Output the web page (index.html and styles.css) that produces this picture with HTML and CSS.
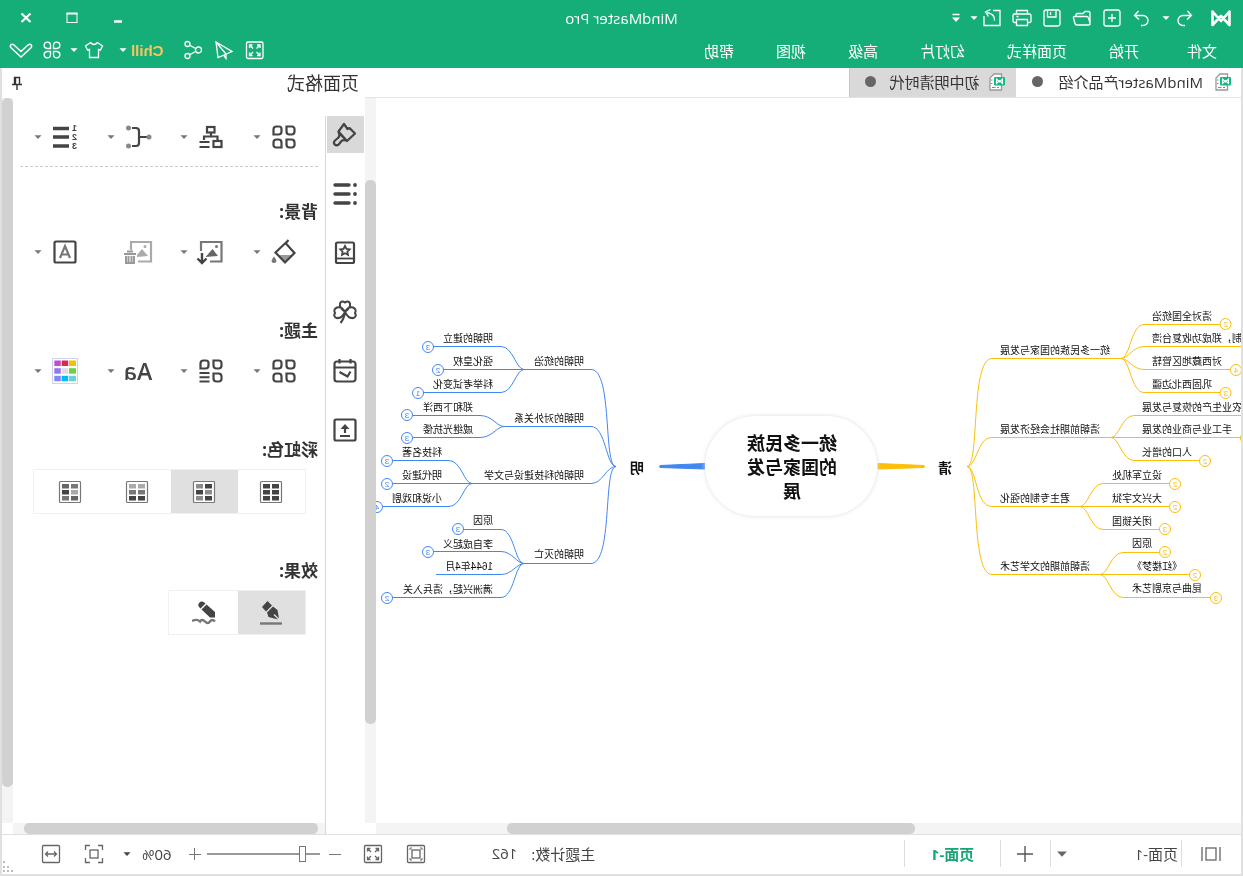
FILE: index.html
```html
<!DOCTYPE html>
<html lang="zh-CN">
<head>
<meta charset="utf-8">
<title>MindMaster Pro</title>
<link rel="stylesheet" href="styles.css">
</head>
<body>
<svg class="defs" aria-hidden="true">
  <symbol id="caret" viewBox="0 0 10 10"><path d="M1.500 3.200h7L5 7z" fill="currentColor"/></symbol>
  <symbol id="doc" viewBox="0 0 16 18"><path d="M3.500 1h7.500l4 4v12H3.500z" fill="#fff" stroke="#999" stroke-width="1.300"/><path d="M12.500 7h1.500M12.500 10.500h1.500M6 14.500h2M9.500 14.500h3.500" stroke="#888"/><rect x="0" y="4" width="11" height="8.500" rx="1" fill="#10b981"/><path d="M2.500 10.500V6L5.500 9 8.500 6v4.500L5.500 7.500z" fill="none" stroke="#fff" stroke-width="1.100"/></symbol>
  <symbol id="leaves" viewBox="0 0 26 26"><g fill="none" stroke="currentColor" stroke-width="2.200"><path d="M5 2.500h5.500v5a3 3 0 0 1-3 3h-2a3 3 0 0 1-3-3V5A2.500 2.500 0 0 1 5 2.500z"/><path d="M18 2.500h2.500A3 3 0 0 1 23.500 5.500v5h-5a3 3 0 0 1-3-3V5A2.500 2.500 0 0 1 18 2.500z"/><path d="M5.500 15.500h5v5a3 3 0 0 1-3 3H5A2.500 2.500 0 0 1 2.500 21v-2.500a3 3 0 0 1 3-3z"/><path d="M18.500 15.500h2a3 3 0 0 1 3 3V21a2.500 2.500 0 0 1-2.500 2.500h-5.500v-5a3 3 0 0 1 3-3z"/></g></symbol>
</svg>
<div class="app">
  <header class="header">
    <div class="titlebar">
      <div class="quick">
        <svg class="logo" viewBox="0 0 22 20"><path d="M2.500 17V3.500L11 13 19.500 3.500V17L11 8z" fill="none" stroke="#fff" stroke-width="2.600" stroke-linejoin="round"/></svg>
        <button class="ic" aria-label="撤销"><svg viewBox="0 0 20 20"><path d="M6.500 3L2.500 7.500l4.500 4M3 7.500h8a5 5 0 0 1 0 10H9"/></svg></button>
        <button class="dd" aria-label="撤销列表"><svg><use href="#caret"/></svg></button>
        <button class="ic redo" aria-label="重做"><svg viewBox="0 0 20 20"><path d="M13.500 3l4 4.500-4.500 4M17 7.500H9a5 5 0 0 0 0 10h2"/></svg></button>
        <button class="ic" aria-label="新建"><svg viewBox="0 0 20 20"><rect x="2" y="2" width="16" height="16" rx="2"/><path d="M10 6v8M6 10h8"/></svg></button>
        <button class="ic" aria-label="打开"><svg viewBox="0 0 20 20"><path d="M2 17V5q0-1.500 1.500-1.500H7l2 2h5.500Q16 5.500 16 7v1M2 15l1.500-5Q4 8.500 5.500 8.500h12q1.500 0 1 1.500l-1.500 5.500Q16.700 17 15 17H3q-1 0-1-2z"/></svg></button>
        <button class="ic" aria-label="保存"><svg viewBox="0 0 20 20"><rect x="2" y="2" width="16" height="16" rx="2"/><path d="M6 2v7h8.500V2M11.500 4v3"/></svg></button>
        <button class="ic" aria-label="打印"><svg viewBox="0 0 20 20"><path d="M4.500 6V2.500h11V6M4.500 14.500H2.500Q1 14.500 1 13V7.500Q1 6 2.500 6h15Q19 6 19 7.500V13q0 1.500-1.500 1.500h-2M4.500 11.500h11v6h-11zM13.500 8.500h2"/></svg></button>
        <button class="ic" aria-label="导出"><svg viewBox="0 0 20 20"><path d="M9 2.500H2v15h16V8M7.500 12.500Q7 6 15 4.500M11.500 1.500l5 2.500-3 4.500"/></svg></button>
        <button class="dd" aria-label="导出列表"><svg><use href="#caret"/></svg></button>
        <button class="dd more" aria-label="自定义快速访问"><svg viewBox="0 0 10 12"><path d="M1.500 2.500h7" stroke="#fff" stroke-width="1.500"/><path d="M1 5.500h8L5 10z" fill="#fff"/></svg></button>
      </div>
      <h1 class="title">MindMaster Pro</h1>
      <div class="winbtns">
        <button aria-label="最小化"><svg viewBox="0 0 14 14"><path d="M3 10.500h8" stroke="#fff" stroke-width="2.500"/></svg></button>
        <button aria-label="最大化"><svg viewBox="0 0 14 14"><rect x="2" y="2.500" width="10" height="9" fill="none" stroke="#fff"/><path d="M1.500 2.500h11" stroke="#fff" stroke-width="2"/></svg></button>
        <button aria-label="关闭"><svg viewBox="0 0 14 14"><path d="M2.500 2.500l9 8.500M11.500 2.500L2.500 11" stroke="#fff" stroke-width="2.200"/></svg></button>
      </div>
    </div>
    <div class="menubar">
      <nav class="menus">
        <button class="file">文件</button><button>开始</button><button>页面样式</button><button>幻灯片</button><button>高级</button><button>视图</button><button>帮助</button>
      </nav>
      <div class="tools">
        <button class="ic" aria-label="全屏"><svg viewBox="0 0 20 20"><rect x="2" y="2" width="16.500" height="16.500" rx="1.500"/><path d="M5 8V5h3M5 5l3.500 3.500M12.500 5h3v3M15.500 5L12 8.500M5 12.500v3h3M5 15.500L8.500 12M15.500 12.500v3h-3M15.500 15.500L12 12"/></svg></button>
        <button class="ic" aria-label="发送"><svg viewBox="0 0 20 20"><path d="M18 2L2 11.500l5.500 2.500L16 17.500zM18 2L8 14v4.500l2.500-3.500"/></svg></button>
        <button class="ic share" aria-label="分享"><svg viewBox="0 0 20 20"><circle cx="4.500" cy="10" r="3"/><circle cx="15.500" cy="4" r="2.500"/><circle cx="15.500" cy="16" r="2.500"/><path d="M7 8.700l6.300-3.500M7 11.300l6.300 3.500"/></svg></button>
        <button class="chill">Chill</button>
        <button class="dd chilldd" aria-label="音乐"><svg><use href="#caret"/></svg></button>
        <button class="ic" aria-label="皮肤"><svg viewBox="0 0 20 20"><path d="M6.500 2.500Q10 6.500 13.500 2.500L18.500 6l-2 4-2-.7V17.500h-9V9.300l-2 .7-2-4z"/></svg></button>
        <button class="dd skindd" aria-label="皮肤列表"><svg><use href="#caret"/></svg></button>
        <button class="ic apps" aria-label="应用"><svg viewBox="0 0 20 20"><path d="M8.500 8.500H5A3.200 3.200 0 1 1 8.500 5zM11.500 8.500V5A3.200 3.200 0 1 1 15 8.500zM8.500 11.500V15A3.200 3.200 0 1 1 5 11.500zM11.500 11.500H15A3.200 3.200 0 1 1 11.500 15z"/></svg></button>
        <button class="fold" aria-label="折叠"><svg viewBox="0 0 24 20"><path d="M1.800 7.500Q.8 5.800 2 4.700 3.500 3.500 5 5l7 6.500L19 5q1.500-1.500 3-.3 1.200 1.100.2 2.800L12 17z" fill="none" stroke="#fff" stroke-width="1.500"/></svg></button>
      </div>
    </div>
  </header>

  <main class="workspace">
    <section class="editor">
      <div class="tabs">
        <button class="tab active"><svg class="doc"><use href="#doc"/></svg><span>MindMaster产品介绍</span><i class="dot"></i></button>
        <button class="tab"><svg class="doc"><use href="#doc"/></svg><span>初中明清时代</span><i class="dot"></i></button>
      </div>
      <div class="canvas">
        <svg class="map" width="865" height="725" viewBox="2 98 865 725">
          <g class="yellow">
            <path d="M319 465.500L365 463.500V469L319 467.500Q318 466.500 319 465.500z" class="taper"/>
            <path d="M276 466.500C263 466.500 273 358.500 251 358.500H122M276 466.500C266 466.500 266 437.500 251 437.500H132M276 466.500C266 466.500 268 506.500 251 506.500H163M276 466.500C263 466.500 273 574.500 251 574.500H143"/>
            <path d="M122 358.500C113 358.500 112 324.500 99 324.500H23M122 358.500C115 358.500 110 346.500 99 346.500H2M122 358.500C115 358.500 110 369.500 99 369.500H13M122 358.500C113 358.500 112 392.500 99 392.500H23"/>
            <path d="M132 437.500C124 437.500 121 415.500 109 415.500H2M132 437.500H2M132 437.500C124 437.500 121 460.500 109 460.500H44"/>
            <path d="M163 506.500C155 506.500 152 483.500 140 483.500H74M163 506.500H74M163 506.500C155 506.500 152 529.500 140 529.500H84"/>
            <path d="M143 574.500C135 574.500 132 552.500 120 552.500H84M143 574.500H54M143 574.500C135 574.500 132 597.500 120 597.500H33"/>
            <g class="rings"><circle cx="17.500" cy="324" r="5.500"/><circle cx="7" cy="370" r="5.500"/><circle cx="17.500" cy="393" r="5.500"/><circle cx="-3" cy="438" r="5.500"/><circle cx="38" cy="461" r="5.500"/><circle cx="68" cy="484" r="5.500"/><circle cx="68" cy="507" r="5.500"/><circle cx="78" cy="529" r="5.500"/><circle cx="78" cy="552" r="5.500"/><circle cx="48" cy="575" r="5.500"/><circle cx="27" cy="598" r="5.500"/></g>
            <g class="nums"><text x="17" y="327">2</text><text x="7" y="373">4</text><text x="17" y="396">3</text><text x="38" y="464">2</text><text x="68" y="487">2</text><text x="68" y="510">2</text><text x="78" y="532">3</text><text x="78" y="555">2</text><text x="48" y="578">2</text><text x="27" y="601">3</text></g>
          </g>
          <g class="topics end">
            <text x="243" y="354">统一多民族的国家与发展</text><text x="243" y="433">清朝前期社会经济发展</text><text x="243" y="502">君主专制的强化</text><text x="243" y="570">清朝前期的文学艺术</text>
            <text x="91" y="320">清对全国统治</text><text x="91" y="342">制，郑成功收复台湾</text><text x="91" y="365">对西藏地区管辖</text><text x="91" y="388">巩固西北边疆</text>
            <text x="101" y="411">农业生产的恢复与发展</text><text x="101" y="433">手工业与商业的发展</text><text x="101" y="456">人口的增长</text>
            <text x="131" y="479">设立军机处</text><text x="131" y="502">大兴文字狱</text><text x="131" y="525">闭关锁国</text>
            <text x="111" y="547">原因</text><text x="111" y="570">《红楼梦》</text><text x="111" y="592">昆曲与京剧艺术</text>
          </g>
          <g class="blue">
            <path d="M583 465.500L538 463.500V469L583 467.500Q584 466.500 583 465.500z" class="taper"/>
            <path d="M627 466.500C640 466.500 630 369.500 652 369.500H719M627 466.500C637 466.500 637 426.500 652 426.500H739M627 466.500C637 466.500 640 483.500 652 483.500H771M627 466.500C640 466.500 630 563.500 652 563.500H719"/>
            <path d="M719 369.500C727 369.500 730 346.500 742 346.500H810M719 369.500H800M719 369.500C727 369.500 730 392.500 742 392.500H820"/>
            <path d="M739 426.500C746 426.500 751 415.500 763 415.500H830M739 426.500C746 426.500 751 437.500 763 437.500H830"/>
            <path d="M771 483.500C779 483.500 782 460.500 794 460.500H850M771 483.500H850M771 483.500C779 483.500 782 506.500 794 506.500H861"/>
            <path d="M719 563.500C728 563.500 729 529.500 742 529.500H779M719 563.500C726 563.500 731 551.500 742 551.500H809M719 563.500C726 563.500 731 574.500 742 574.500H807M719 563.500C728 563.500 729 597.500 742 597.500H850"/>
            <g class="rings"><circle cx="815" cy="347" r="5.500"/><circle cx="805" cy="370" r="5.500"/><circle cx="825" cy="393" r="5.500"/><circle cx="836" cy="415" r="5.500"/><circle cx="836" cy="438" r="5.500"/><circle cx="856" cy="461" r="5.500"/><circle cx="856" cy="484" r="5.500"/><circle cx="866" cy="507" r="5.500"/><circle cx="785" cy="529" r="5.500"/><circle cx="815" cy="552" r="5.500"/><circle cx="856" cy="598" r="5.500"/></g>
            <g class="nums"><text x="815" y="350">3</text><text x="805" y="373">2</text><text x="825" y="396">1</text><text x="836" y="418">3</text><text x="836" y="441">3</text><text x="856" y="464">3</text><text x="856" y="487">2</text><text x="866" y="510">4</text><text x="785" y="532">3</text><text x="815" y="555">3</text><text x="856" y="601">2</text></g>
          </g>
          <g class="topics">
            <text x="659" y="365">明朝的统治</text><text x="659" y="422">明朝的对外关系</text><text x="659" y="479">明朝的科技建设与文学</text><text x="659" y="558">明朝的灭亡</text>
            <text x="750" y="342">明朝的建立</text><text x="750" y="365">强化皇权</text><text x="750" y="388">科举考试变化</text>
            <text x="770" y="411">郑和下西洋</text><text x="770" y="433">戚继光抗倭</text>
            <text x="801" y="456">科技名著</text><text x="801" y="479">明代建设</text><text x="801" y="502">小说和戏剧</text>
            <text x="750" y="524">原因</text><text x="750" y="548">李自成起义</text><text x="750" y="570">1644年4月</text><text x="750" y="593">满洲兴起，清兵入关</text>
          </g>
          <g class="mains"><text x="291" y="473">清</text><text x="599" y="473">明</text></g>
          <rect class="root" x="366" y="416" width="172" height="100" rx="50"/>
          <g class="roottext"><text x="451" y="450">统一多民族</text><text x="451" y="474">的国家与发</text><text x="451" y="498">展</text></g>
        </svg>
      </div>
      <div class="vscroll"><div class="thumb"></div></div>
      <div class="hscroll"><div class="thumb"></div></div>
    </section>

    <aside class="sidebar">
      <div class="sidehead"><h2>页面格式</h2><button class="pin" aria-label="固定"><svg viewBox="0 0 14 14"><path d="M4.500 8V1.500h5V8M8.500 1.500V8M2 8.500h10M7 9v5" fill="none" stroke="#333" stroke-width="1.400"/></svg></button></div>
      <div class="rail">
        <button class="on" aria-label="页面格式"><svg viewBox="0 0 26 26"><path d="M14 2L19.500 9.500 11 19 3 11.500 8.500 6 10.500 7zM20 10L10.500 19.500M19 11.500q-1 3 1 4.500l3 2.500q2 2 .3 4-2 1.500-4 0l-2.800-3.500q-1.500-1.500-4.500-.5" stroke-linejoin="round"/></svg></button>
        <button aria-label="大纲"><svg viewBox="0 0 26 26"><path d="M9 4h14M9 13h14M9 22h14" stroke-width="3.400" stroke-linecap="round"/><g fill="currentColor" stroke="none"><circle cx="3" cy="4" r="1.900"/><circle cx="3" cy="13" r="1.900"/><circle cx="3" cy="22" r="1.900"/></g></svg></button>
        <button aria-label="图标"><svg viewBox="0 0 26 26"><rect x="4" y="2.500" width="18" height="20.500" rx="1.500"/><path d="M4 18.500h18" stroke-width="1.800"/><path d="M13 6l1.500 3 3.200.4-2.300 2.200.6 3.200-3-1.500-3 1.500.6-3.200L8.300 9.400l3.200-.4z" stroke-width="1.800"/></svg></button>
        <button aria-label="剪贴画"><svg viewBox="0 0 26 26"><path d="M13 13Q7 8.500 8 4.500 9.500 1 13 3.500 16.500 1 18 4.500q1 4-5 8.500zM13 13Q10 7.500 5 8.500 1 10.500 3 14 1 17.500 4.500 19 9.500 20 13 13zM13 13Q16 7.500 21 8.500q4 2 2 5.500 2 3.500-1.500 5Q16.500 20 13 13zM13 13q1 7 4.500 11" stroke-width="2"/></svg></button>
        <button aria-label="任务"><svg viewBox="0 0 26 26"><rect x="2.500" y="3.500" width="21" height="20" rx="2.500"/><path d="M2.500 9.500h21M7.500 1v4.500M18.500 1v4.500M7.500 13.500l3 5 8-4.500"/></svg></button>
        <button aria-label="导出"><svg viewBox="0 0 26 26"><rect x="2.500" y="2.500" width="21" height="21" rx="1.500"/><path d="M8 19h10M13 16v-5"/><path d="M8.500 12L13 7l4.500 5z" fill="currentColor" stroke="none"/></svg></button>
      </div>
      <div class="panel">
        <div class="row first">
          <button aria-label="布局"><svg><use href="#leaves"/></svg><svg class="c"><use href="#caret"/></svg></button>
          <button aria-label="结构"><svg viewBox="0 0 26 26" fill="none" stroke="currentColor" stroke-width="2.200"><rect x="9.500" y="3" width="7.500" height="5.500"/><path d="M13 9v4M6.500 16v-3.500h13.500V16"/><rect x="2.500" y="17" width="8" height="6"/><path d="M14.500 18h10M14.500 23h10"/></svg><svg class="c"><use href="#caret"/></svg></button>
          <button aria-label="连线"><svg viewBox="0 0 26 26"><path d="M3 13h9M19 4h-4q-3 0-3 3v12q0 3 3 3h4" fill="none" stroke="currentColor" stroke-width="2.200"/><g fill="#888"><circle cx="2" cy="13" r="2.500"/><circle cx="22.500" cy="4" r="2.500"/><circle cx="22.500" cy="22" r="2.500"/></g></svg><svg class="c"><use href="#caret"/></svg></button>
          <button aria-label="编号"><svg viewBox="0 0 26 26"><path d="M9 4.500h16M9 13h16M9 22h16" stroke="currentColor" stroke-width="3.400"/><g class="tiny"><text x="1" y="7">1</text><text x="1" y="16">2</text><text x="1" y="25">3</text></g></svg><svg class="c"><use href="#caret"/></svg></button>
        </div>
        <h3>背景:</h3>
        <div class="row">
          <button aria-label="背景颜色"><svg viewBox="0 0 26 26"><path d="M4.500 16h15L12.500 23z" fill="#999"/><path d="M11.500 4l10 9.500-9.500 10L2.500 14zM12 5L8.500 1" fill="none" stroke="currentColor" stroke-width="2.200"/><path d="M23 17.500q5 6 0 6.500-5-.5 0-6.500z" fill="#777"/></svg><svg class="c"><use href="#caret"/></svg></button>
          <button aria-label="背景图片"><svg viewBox="0 0 26 26"><path d="M14 22.500H2.500V3H23v9" fill="none" stroke="#777" stroke-width="2.200"/><path d="M6 17l5.500-7 7 8z" fill="#666"/><circle cx="7.500" cy="7.500" r="1.500" fill="#777"/><path d="M22 14v9M17.500 19.500l4.500 4.500 4.500-4.500" fill="none" stroke="#444" stroke-width="2.400"/></svg><svg class="c"><use href="#caret"/></svg></button>
          <button disabled aria-label="移除背景"><svg viewBox="0 0 26 26"><path d="M13 22.500H0V3h20v8" fill="none" stroke="#aaa" stroke-width="2.200"/><path d="M3 17l6-7 5 6v2z" fill="#aaa"/><circle cx="6" cy="7.500" r="1.500" fill="#aaa"/><path d="M15 15h12M18 12.500h6M17 17v7h8v-7M19.500 17v6M22.500 17v6" fill="none" stroke="#999" stroke-width="2"/></svg></button>
          <button aria-label="水印"><svg viewBox="0 0 26 26"><rect x="2.500" y="2.500" width="21" height="21" rx="1.500" fill="none" stroke="currentColor" stroke-width="2.200"/><path d="M8 19l5-12 5 12M9.500 15.500h7" fill="none" stroke="#777" stroke-width="2.200"/></svg><svg class="c"><use href="#caret"/></svg></button>
        </div>
        <h3>主题:</h3>
        <div class="row">
          <button aria-label="主题"><svg><use href="#leaves"/></svg><svg class="c"><use href="#caret"/></svg></button>
          <button aria-label="主题样式"><svg viewBox="0 0 26 26" fill="none" stroke="currentColor" stroke-width="2.200"><path d="M5 2.500h5.500v5a3 3 0 0 1-3 3h-2a3 3 0 0 1-3-3V5A2.500 2.500 0 0 1 5 2.500zM18 2.500h2.500a3 3 0 0 1 3 3v5h-5a3 3 0 0 1-3-3V5A2.500 2.500 0 0 1 18 2.500zM5.500 15.500h5v5a3 3 0 0 1-3 3H5A2.500 2.500 0 0 1 2.500 21v-2.500a3 3 0 0 1 3-3z"/><path d="M14.500 15h10M14.500 19.300h10M14.500 23.500h10" stroke-width="1.900"/></svg><svg class="c"><use href="#caret"/></svg></button>
          <button><span class="aa">Aa</span><svg class="c"><use href="#caret"/></svg></button>
          <button aria-label="主题颜色"><svg viewBox="0 0 26 26"><rect x=".5" y=".5" width="25" height="25" fill="#fff" stroke="#cdd3ea"/><path fill="#f2c100" d="M2 2.500h7V8H2z"/><path fill="#dc2954" d="M9.800 2.500h6.500V8H9.800z"/><path fill="#bf4fd0" d="M17.200 2.500h6.500V8h-6.500z"/><path fill="#6fd044" d="M2 10.200h7v5.500H2z"/><path fill="#ddd" d="M9.800 10.200h6.500v5.500H9.800z"/><path fill="#9278ee" d="M17.200 10.200h6.500v5.500h-6.500z"/><path fill="#6ccfe0" d="M2 17.800h7v5.500H2z"/><path fill="#00b8f4" d="M9.800 17.800h6.500v5.500H9.800z"/><path fill="#7b88ff" d="M17.200 17.800h6.500v5.500h-6.500z"/></svg><svg class="c"><use href="#caret"/></svg></button>
        </div>
        <h3>彩虹色:</h3>
        <div class="seg">
          <button aria-label="单色"><svg viewBox="0 0 24 24"><rect x="1.500" y="1.500" width="21" height="21" rx="1"/><path fill="#444" d="M4 4h7v4.500H4zM13 4h7v4.500h-7zM4 10h7v4.500H4zM13 10h7v4.500h-7zM4 16h7v4.500H4zM13 16h7v4.500h-7z"/></svg></button>
          <button class="on" aria-label="交错"><svg viewBox="0 0 24 24"><rect x="1.500" y="1.500" width="21" height="21" rx="1"/><path fill="#444" d="M4 4h7v4.500H4zM13 10h7v4.500h-7zM4 16h7v4.500H4z"/><path fill="#8c8c8c" d="M13 4h7v4.500h-7zM4 10h7v4.500H4zM13 16h7v4.500h-7z"/></svg></button>
          <button aria-label="渐变"><svg viewBox="0 0 24 24"><rect x="1.500" y="1.500" width="21" height="21" rx="1"/><path fill="#aaa" d="M4 4h7v4.500H4zM13 4h7v4.500h-7z"/><path fill="#777" d="M4 10h7v4.500H4zM13 10h7v4.500h-7z"/><path fill="#444" d="M4 16h7v4.500H4zM13 16h7v4.500h-7z"/></svg></button>
          <button aria-label="多彩"><svg viewBox="0 0 24 24"><rect x="1.500" y="1.500" width="21" height="21" rx="1"/><path fill="#777" d="M4 4h7v4.500H4zM13 16h7v4.500h-7z"/><path fill="#666" d="M13 4h7v4.500h-7zM4 16h7v4.500H4z"/><path fill="#aaa" d="M4 10h7v4.500H4z"/><path fill="#444" d="M13 10h7v4.500h-7z"/></svg></button>
        </div>
        <h3>效果:</h3>
        <div class="seg two">
          <button class="on" aria-label="钢笔"><svg viewBox="0 0 24 24"><path d="M11 4.500L15.500 0l5.500 6-4 4.500zM10 5.500l6 6-1.500 4.500L5 18.500l4.500-4.500-1-1L4 17.500 5.500 9z" fill="#444"/><path d="M1 22.500h22" stroke="#777" stroke-width="2.400"/></svg></button>
          <button aria-label="手绘"><svg viewBox="0 0 24 24"><path d="M1 15v-4L9.500 3.500l5 5L6 16.500H1zM10.500 2.500Q14-1 17 2q2 3-1.500 5.500z" fill="#444"/><path d="M1 20.500q3-3 5 0t5 0 5 0q3-3 8-.5" fill="none" stroke="#777" stroke-width="2.400"/></svg></button>
        </div>
      </div>
      <div class="sidev"><div class="thumb"></div></div>
      <div class="sideh"><div class="thumb"></div></div>
    </aside>
  </main>

  <footer class="status">
    <button class="ic pages" aria-label="页面面板"><svg viewBox="0 0 20 20"><rect x="5" y="4" width="10" height="12"/><path d="M1 3v14M19 3v14"/></svg></button>
    <div class="pagelist"><span>页面-1</span><button class="dd" aria-label="选择页面"><svg><use href="#caret"/></svg></button></div>
    <button class="add" aria-label="新增页面"><svg viewBox="0 0 18 18"><path d="M9 1v16M1 9h16" stroke="#555" stroke-width="1.400"/></svg></button>
    <button class="curpage">页面-1</button>
    <div class="count"><span>主题计数:</span><span>162</span></div>
    <div class="zoom">
      <button class="ic" aria-label="适合页面"><svg viewBox="0 0 20 20"><rect x="1.500" y="1.500" width="17" height="17" rx="1"/><rect x="6" y="6" width="8" height="8"/><path d="M4 6V4h2M14 4h2v2M4 14v2h2M14 16h2v-2" stroke-width="1"/></svg></button>
      <button class="ic fit" aria-label="全屏显示"><svg viewBox="0 0 20 20"><rect x="1.500" y="1.500" width="17" height="17" rx="1"/><path d="M4.500 7.500v-3h3M4.500 4.500l3.500 3.500M12.500 4.500h3v3M15.500 4.500L12 8M4.500 12.500v3h3M4.500 15.500L8 12M15.500 12.500v3h-3M15.500 15.500L12 12"/></svg></button>
      <button class="step" aria-label="缩小"><svg viewBox="0 0 14 14"><path d="M1 7.500h12" stroke="#777"/></svg></button>
      <input type="range" class="range" min="0" max="100" value="13" aria-label="缩放">
      <button class="step" aria-label="放大"><svg viewBox="0 0 14 14"><path d="M1 7.500h12M7.500 1v12" stroke="#777"/></svg></button>
      <span class="pct">60%</span>
      <button class="dd" aria-label="缩放比例"><svg><use href="#caret"/></svg></button>
      <button class="ic center" aria-label="居中"><svg viewBox="0 0 20 20"><rect x="6" y="6" width="8" height="8"/><path d="M1.500 6V1.500H6M14 1.500h4.500V6M1.500 14v4.500H6M18.500 14v4.500H14"/></svg></button>
      <button class="ic width" aria-label="适合宽度"><svg viewBox="0 0 20 20"><rect x="1.500" y="1.500" width="17" height="17" rx="1"/><path d="M4.500 10h11M7 7.500L4.500 10 7 12.500M13 7.500l2.500 2.500-2.500 2.500"/></svg></button>
    </div>
    <svg class="grip" viewBox="0 0 12 12"><path d="M9 0h2v2H9zM9 5h2v2H9zM5 5h2v2H5zM9 9h2v2H9zM5 9h2v2H5zM1 9h2v2H1z" fill="#bbb"/></svg>
  </footer>
</div>
</body>
</html>
```
FILE: styles.css
```css
* { box-sizing: border-box; }

body {
  margin: 0;
  font-family: "Open Sans", "Noto Sans CJK SC", sans-serif;
  font-size: 15px;
  color: #333;
}

button {
  border: 0;
  padding: 0;
  margin: 0;
  background: none;
  font: inherit;
  color: inherit;
  display: flex;
  align-items: center;
  justify-content: center;
}

svg { display: block; }
.defs { position: absolute; width: 0; height: 0; }

/* The whole window is shown mirrored */
.app {
  display: flex;
  flex-direction: column;
  height: 100vh;
  min-height: 700px;
  background: #fff;
  transform: scaleX(-1);
  overflow: hidden;
}

.header { background: #16ae78; color: #fff; }
.titlebar { display: grid; grid-template-columns: 1fr auto 1fr; align-items: center; height: 36px; }
.quick { display: flex; align-items: center; padding-left: 11px; gap: 10px; }
.logo { width: 22px; height: 20px; margin-right: 6px; }
.ic svg { width: 20px; height: 20px; fill: none; stroke: currentColor; stroke-width: 1.3px; }
.dd svg { width: 10px; height: 10px; }
.quick .dd { margin-left: -7px; }
.quick .redo { margin-left: -1px; }
.quick .dd.more { margin-left: -2px; }
.quick .more svg { height: 12px; }
.title { margin: 0; font-size: 15px; font-weight: 400; line-height: 20px; }
.winbtns { display: flex; justify-content: flex-end; padding-right: 3px; }
.winbtns button { width: 46px; height: 32px; }
.winbtns svg { width: 14px; height: 14px; }

.menubar { display: flex; justify-content: space-between; height: 32px; padding: 0 9px 4px 26px; }
.menus { display: flex; gap: 42px; }
.menus .file { margin-right: 6px; }
.tools { display: flex; align-items: center; }
.tools .ic { margin-left: 11px; }
.tools .chill { margin-left: 20px; font: bold 15px "Liberation Sans", sans-serif; color: #f9c65d; }
.tools .chilldd { margin: 0 3px; }
.tools .skindd { margin: 0 -4px 0 5px; }
.tools .fold { margin-left: 9px; }
.fold svg { width: 24px; height: 20px; }

.workspace {
  flex: 1;
  display: flex;
  min-height: 0;
  border: solid #e0e0e0;
  border-width: 0 2px;
}

.editor {
  flex: 1;
  min-width: 0;
  display: grid;
  grid-template-columns: 1fr 11px;
  grid-template-rows: 30px 1fr 11px;
}
.tabs { grid-column: 1 / 3; display: flex; border-bottom: 1px solid #e3e3e3; }
.tab { gap: 10px; padding: 0 15px 2px 11px; background: #d9d9d9; border-right: 1px solid #c8c8c8; }
.tab.active { gap: 12px; padding: 0 16px 2px 10px; background: #fff; border: 0; }
.tab .doc { width: 16px; height: 18px; }
.dot { width: 11px; height: 11px; border-radius: 50%; background: #666; margin-left: 3px; }
.canvas { overflow: hidden; display: flex; align-items: flex-start; justify-content: center; }
.map { flex: none; font-family: "Liberation Sans", "Noto Sans CJK SC", sans-serif; }

.yellow { --c: #fdbe0a; }
.blue { --c: #4187f2; }
.yellow path, .blue path { fill: none; stroke: var(--c); stroke-width: 1px; }
.yellow .taper, .blue .taper { fill: var(--c); }
.rings circle { fill: #fff; stroke: var(--c); }
.nums text { font-size: 8px; fill: var(--c); text-anchor: middle; }
.topics text { font-size: 10px; fill: #111; }
.topics.end text { text-anchor: end; }
.mains text { font-size: 14px; font-weight: 700; fill: #111; }
.root { fill: #fff; filter: drop-shadow(0 0 2px #ddd); }
.roottext text { font-size: 18px; font-weight: 700; fill: #111; text-anchor: middle; }

.vscroll, .hscroll, .sidev, .sideh { display: flex; background: #f4f4f4; }
.vscroll, .sidev { flex-direction: column; }
.thumb { flex: 1; background: #d1d1d1; border-radius: 5px; }
.vscroll { padding: 82px 0 99px; }
.hscroll { padding: 0 131px 0 326px; }

.sidebar {
  width: 363px;
  display: grid;
  grid-template-columns: 39px 1fr 11px;
  grid-template-rows: 30px 1fr 11px;
}
.sidehead { grid-column: 1 / 4; display: flex; align-items: center; justify-content: space-between; padding: 0 8px 0 6px; }
.sidehead h2 { margin: 0; font-size: 18px; line-height: 26px; font-weight: 400; }
.pin svg { width: 14px; height: 14px; }
.rail { grid-row: 2 / 4; padding: 18px 1px; display: flex; flex-direction: column; gap: 22px; color: #444; }
.rail button { width: 37px; height: 37px; }
.rail .on { background: #d9d9d9; }
.rail svg { width: 26px; height: 26px; fill: none; stroke: currentColor; stroke-width: 2.2px; }

.panel { margin-top: 18px; border-left: 1px solid #d8d8d8; padding: 0 7px; overflow: hidden; color: #444; }
.row { display: flex; height: 40px; padding-left: 21px; }
.row button { flex: none; width: 73px; gap: 9px; justify-content: flex-start; }
.row button:last-child { width: 45px; }
.row svg { width: 26px; height: 26px; flex: none; overflow: visible; }
.row svg.c { width: 10px; height: 10px; color: #777; }
.row.first { height: 51px; padding-bottom: 8px; border-bottom: 1px dashed #ccc; }
.tiny text { font: bold 9px "Liberation Sans", sans-serif; fill: #444; }
.aa { width: 26px; display: flex; justify-content: center; font: 600 23px "Open Sans", sans-serif; }
.panel h3 { margin: 47px 0 8px; font-size: 17px; line-height: 24px; font-weight: 700; color: #333; }
.row.first + h3 { margin-top: 33px; }
.seg + h3 { margin-top: 45px; }
.seg { display: flex; width: 273px; height: 45px; margin-top: -1px; margin-left: 12px; border: 1px solid #f0f0f0; }
.seg.two { width: 138px; }
.seg button { width: 67px; }
.seg .on { background: #e0e0e0; }
.seg svg { width: 24px; height: 24px; }
.seg rect { fill: #fff; stroke: #777; stroke-width: 1.2px; }
.sidev { padding-bottom: 36px; }
.sideh { grid-column: 2; padding: 0 11px 0 7px; border-left: 1px solid #d8d8d8; }

.status {
  display: flex;
  align-items: center;
  height: 42px;
  padding-bottom: 2px;
  border: 2px solid #e0e0e0;
  border-top-width: 1px;
  color: #444;
}
.status .ic { color: #666; }
.pages { margin: 0 19px 0 20px; }
.pagelist { display: flex; justify-content: space-between; align-items: center; width: 132px; height: 27px; padding: 0 4px 0 3px; border: solid #ddd; border-width: 0 1px; }
.pagelist .dd svg { width: 14px; height: 14px; color: #666; }
.add { width: 49px; height: 27px; }
.add svg { width: 18px; height: 18px; }
.curpage { width: 97px; height: 27px; border: solid #ddd; border-width: 0 1px; font-weight: 700; color: #16a673; }
.count { display: flex; gap: 14px; margin-left: auto; }
.zoom { display: flex; align-items: center; margin-left: 66px; padding-right: 39px; color: #444; }
.fit { margin-left: 23px; }
.step svg { width: 14px; height: 14px; }
.fit + .step { margin: 0 8px 0 21px; }
.range { appearance: none; width: 113px; height: 16px; margin: 0 5px 0 0; background: linear-gradient(#999, #999) center / 100% 2px no-repeat; }
.range::-webkit-slider-thumb { appearance: none; width: 7px; height: 16px; background: #fff; border: 1px solid #777; }
.pct { margin: 0 10px 0 16px; }
.center { margin: 0 23px 0 18px; }
.grip { position: absolute; right: 2px; bottom: 3px; width: 12px; height: 12px; }
```
